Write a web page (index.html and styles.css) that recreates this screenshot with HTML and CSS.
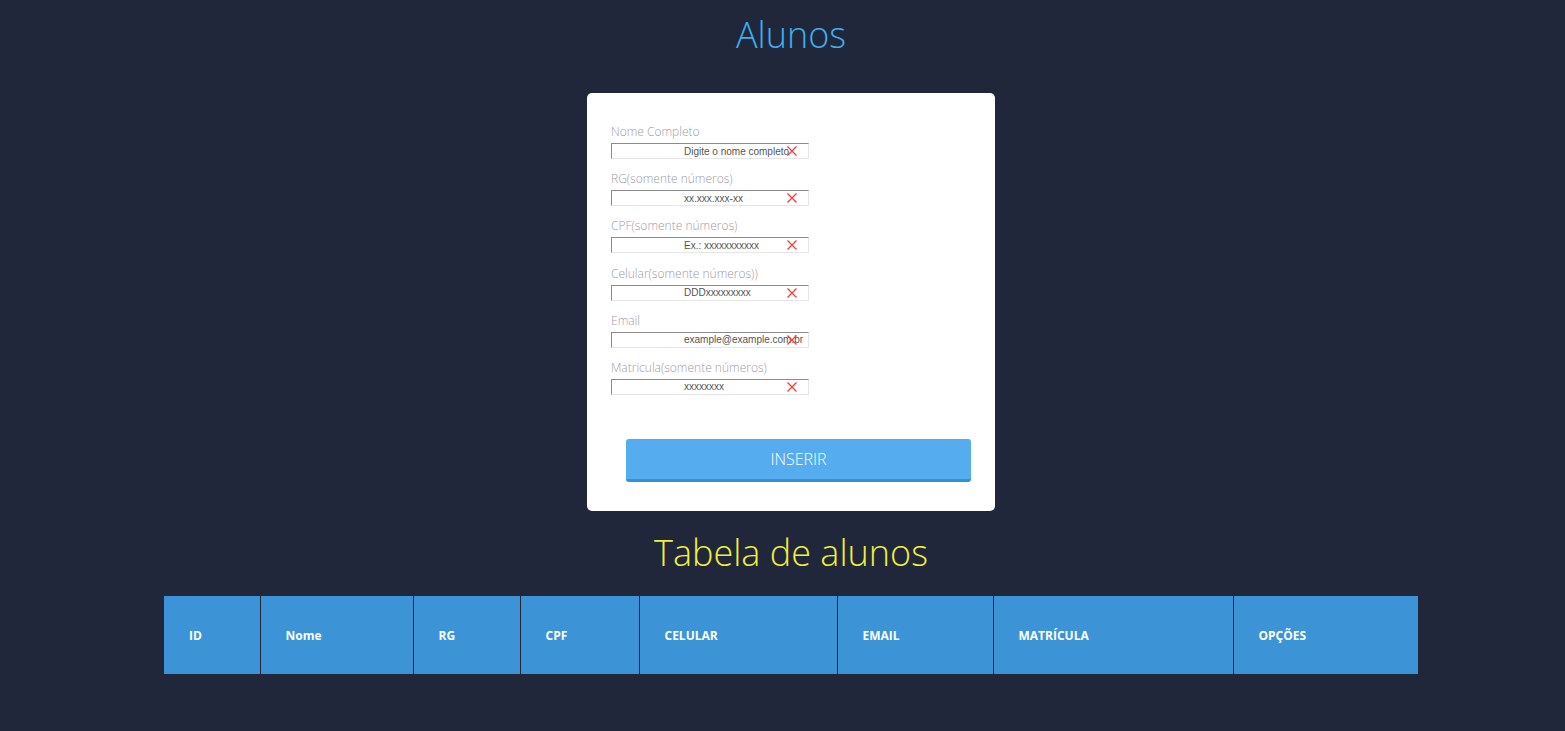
FILE: index.html
```html
<!DOCTYPE html>
<html lang="pt-BR">
<head>
<meta charset="utf-8">
<title>Alunos</title>
<link rel="stylesheet" href="styles.css">
</head>
<body>
<h1 class="title">Alunos</h1>
<form class="card">
  <div class="field">
    <label class="label">Nome Completo</label>
    <div class="input-wrap"><input class="input" placeholder="Digite o nome completo"><svg class="clear" viewBox="0 0 10 10"><path d="M0.5 0.5L9.5 9.5M9.5 0.5L0.5 9.5"/></svg></div>
  </div>
  <div class="field">
    <label class="label">RG(somente números)</label>
    <div class="input-wrap"><input class="input" placeholder="xx.xxx.xxx-xx"><svg class="clear" viewBox="0 0 10 10"><path d="M0.5 0.5L9.5 9.5M9.5 0.5L0.5 9.5"/></svg></div>
  </div>
  <div class="field">
    <label class="label">CPF(somente números)</label>
    <div class="input-wrap"><input class="input" placeholder="Ex.: xxxxxxxxxxx"><svg class="clear" viewBox="0 0 10 10"><path d="M0.5 0.5L9.5 9.5M9.5 0.5L0.5 9.5"/></svg></div>
  </div>
  <div class="field">
    <label class="label">Celular(somente números))</label>
    <div class="input-wrap"><input class="input" placeholder="DDDxxxxxxxxx"><svg class="clear" viewBox="0 0 10 10"><path d="M0.5 0.5L9.5 9.5M9.5 0.5L0.5 9.5"/></svg></div>
  </div>
  <div class="field">
    <label class="label">Email</label>
    <div class="input-wrap"><input class="input" placeholder="example@example.com.br"><svg class="clear" viewBox="0 0 10 10"><path d="M0.5 0.5L9.5 9.5M9.5 0.5L0.5 9.5"/></svg></div>
  </div>
  <div class="field">
    <label class="label">Matricula(somente números)</label>
    <div class="input-wrap"><input class="input" placeholder="xxxxxxxx"><svg class="clear" viewBox="0 0 10 10"><path d="M0.5 0.5L9.5 9.5M9.5 0.5L0.5 9.5"/></svg></div>
  </div>
  <button type="button" class="btn">INSERIR</button>
</form>
<h2 class="subtitle">Tabela de alunos</h2>
<table class="table">
  <colgroup>
    <col style="width:96px"><col style="width:153px"><col style="width:107px"><col style="width:119px">
    <col style="width:198px"><col style="width:156px"><col style="width:240px"><col style="width:185px">
  </colgroup>
  <thead>
    <tr>
      <th>ID</th><th>Nome</th><th>RG</th><th>CPF</th><th>CELULAR</th><th>EMAIL</th><th>MATRÍCULA</th><th>OPÇÕES</th>
    </tr>
  </thead>
</table>
</body>
</html>
```
FILE: styles.css
```css
html, body {
  margin: 0;
  padding: 0;
}
body {
  background: #21273a;
  font-family: "Open Sans", "Liberation Sans", sans-serif;
  min-height: 731px;
  box-sizing: border-box;
  padding-left: 17px;
  display: flex;
  flex-direction: column;
  align-items: center;
}
.title {
  margin: 11px 0 0;
  font-size: 36px;
  line-height: 48px;
  font-weight: 300;
  color: #3cb0ee;
}
.card {
  margin-top: 34px;
  width: 408px;
  box-sizing: border-box;
  background: #fff;
  border-radius: 5px;
  padding: 31px 24px 29px 24px;
  display: flex;
  flex-direction: column;
}
.field {
  display: flex;
  flex-direction: column;
  gap: 3px;
  margin-bottom: 12.2px;
}
.label {
  font-size: 12px;
  line-height: 16px;
  font-weight: 300;
  color: #a19aa8;
}
.input-wrap {
  position: relative;
  width: 198px;
  height: 16px;
}
.input {
  display: block;
  box-sizing: border-box;
  width: 198px;
  height: 16px;
  margin: 0;
  padding: 0 0 0 72px;
  border-width: 1px;
  border-style: solid;
  border-color: #8c8c8c #e6e6e6 #e6e6e6 #8c8c8c;
  font-family: "Liberation Sans", Arial, sans-serif;
  font-size: 10px;
  color: #444;
  outline: none;
  background: #fff;
}
.input::placeholder {
  color: #555;
  opacity: 1;
}
.clear {
  position: absolute;
  left: 176px;
  top: 3px;
  width: 10px;
  height: 10px;
  fill: none;
  stroke: #f03c3c;
  stroke-width: 1.3;
}
.btn {
  margin: 32px 0 0 15px;
  width: 345px;
  height: 43px;
  box-sizing: border-box;
  border: none;
  border-bottom: 3px solid #3a8fd3;
  border-radius: 3px;
  background: #55acee;
  color: #fff;
  font-family: "Open Sans", sans-serif;
  font-weight: 300;
  font-size: 16px;
  padding: 0;
  line-height: 40px;
}
.subtitle {
  margin: 18px 0 0;
  font-size: 36px;
  line-height: 48px;
  font-weight: 300;
  color: #f1ee3e;
}
.table {
  margin-top: 19px;
  width: 1254px;
  border-collapse: collapse;
  table-layout: fixed;
  background: #3c93d6;
}
.table th {
  height: 78px;
  padding: 0 0 0 25px;
  text-align: left;
  color: #fff;
  font-size: 12px;
  font-weight: 700;
  border-left: 1px solid #1f2638;
}
.table th:first-child {
  border-left: none;
}
```
